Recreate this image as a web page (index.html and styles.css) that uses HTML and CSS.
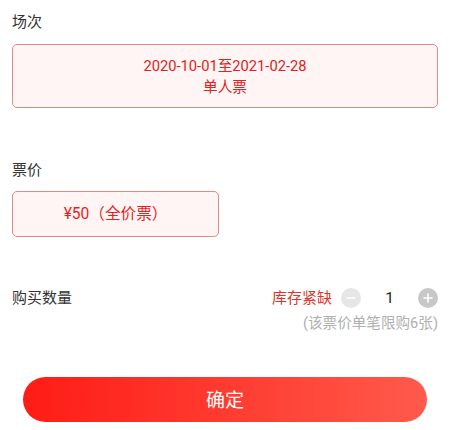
FILE: index.html
```html
<!DOCTYPE html>
<html lang="zh-CN">
<head>
<meta charset="utf-8">
<title>选择票</title>
<link rel="stylesheet" href="styles.css">
</head>
<body>
<div class="page">
  <div class="label">场次</div>
  <div class="box box-session">
    <div class="box-line">2020-10-01至2021-02-28</div>
    <div class="box-line sub">单人票</div>
  </div>

  <div class="label label-price">票价</div>
  <div class="box box-price">¥50（全价票）</div>

  <div class="qty-row">
    <div class="qty-label">购买数量</div>
    <div class="qty-right">
      <span class="stock">库存紧缺</span>
      <span class="circle minus">
        <svg width="20" height="20" viewBox="0 0 20 20"><line x1="6" y1="10" x2="14" y2="10" stroke="#fff" stroke-width="1.6" stroke-linecap="round"/></svg>
      </span>
      <span class="count">1</span>
      <span class="circle plus">
        <svg width="20" height="20" viewBox="0 0 20 20"><line x1="6" y1="10" x2="14" y2="10" stroke="#fff" stroke-width="1.6" stroke-linecap="round"/><line x1="10" y1="6" x2="10" y2="14" stroke="#fff" stroke-width="1.6" stroke-linecap="round"/></svg>
      </span>
    </div>
  </div>
  <div class="tip">(该票价单笔限购6张)</div>

  <button class="confirm">确定</button>
</div>
</body>
</html>
```
FILE: styles.css
```css
html, body {
  margin: 0;
  padding: 0;
  background: #fff;
}
body {
  font-family: Roboto, "Noto Sans CJK SC", sans-serif;
  color: #333;
}
.page {
  padding: 12px 12px 0;
}
.label {
  font-size: 15px;
  line-height: 20px;
  color: #333;
}
.label-price {
  margin-top: 52px;
}
.box {
  box-sizing: border-box;
  border: 1px solid #e28a8a;
  background: #fff5f5;
  border-radius: 5px;
  color: #dd2222;
  text-align: center;
}
.box-session {
  margin-top: 12px;
  height: 64px;
  padding-top: 11px;
  font-size: 14.7px;
}
.box-line {
  line-height: 21px;
}
.box-price {
  margin-top: 11px;
  width: 207px;
  height: 46px;
  font-size: 15.6px;
  line-height: 44px;
  color: #e61f1f;
}
.qty-row {
  margin-top: 51px;
  display: flex;
  justify-content: space-between;
  align-items: center;
  height: 20px;
}
.qty-label {
  font-size: 15px;
  line-height: 20px;
  color: #333;
}
.qty-right {
  display: flex;
  align-items: center;
}
.stock {
  font-size: 15px;
  line-height: 20px;
  color: #e0332b;
  margin-right: 9px;
}
.circle {
  width: 20px;
  height: 20px;
  border-radius: 50%;
  display: flex;
}
.minus {
  background: #e6e6e6;
}
.plus {
  background: #c8c8c8;
}
.count {
  width: 57px;
  text-align: center;
  font-size: 15.5px;
  color: #222;
}
.tip {
  margin-top: 5px;
  text-align: right;
  font-size: 14.6px;
  line-height: 20px;
  color: #b0b0b0;
}
.confirm {
  display: block;
  box-sizing: border-box;
  margin: 44px 11px 0;
  width: calc(100% - 22px);
  height: 45px;
  border: none;
  border-radius: 23px;
  background: linear-gradient(90deg, #ff1c16 0%, #ff3b30 50%, #ff5a4c 100%);
  color: #fff;
  font-family: Roboto, "Noto Sans CJK SC", sans-serif;
  font-size: 19px;
  padding: 0 0 3px;
}
```
